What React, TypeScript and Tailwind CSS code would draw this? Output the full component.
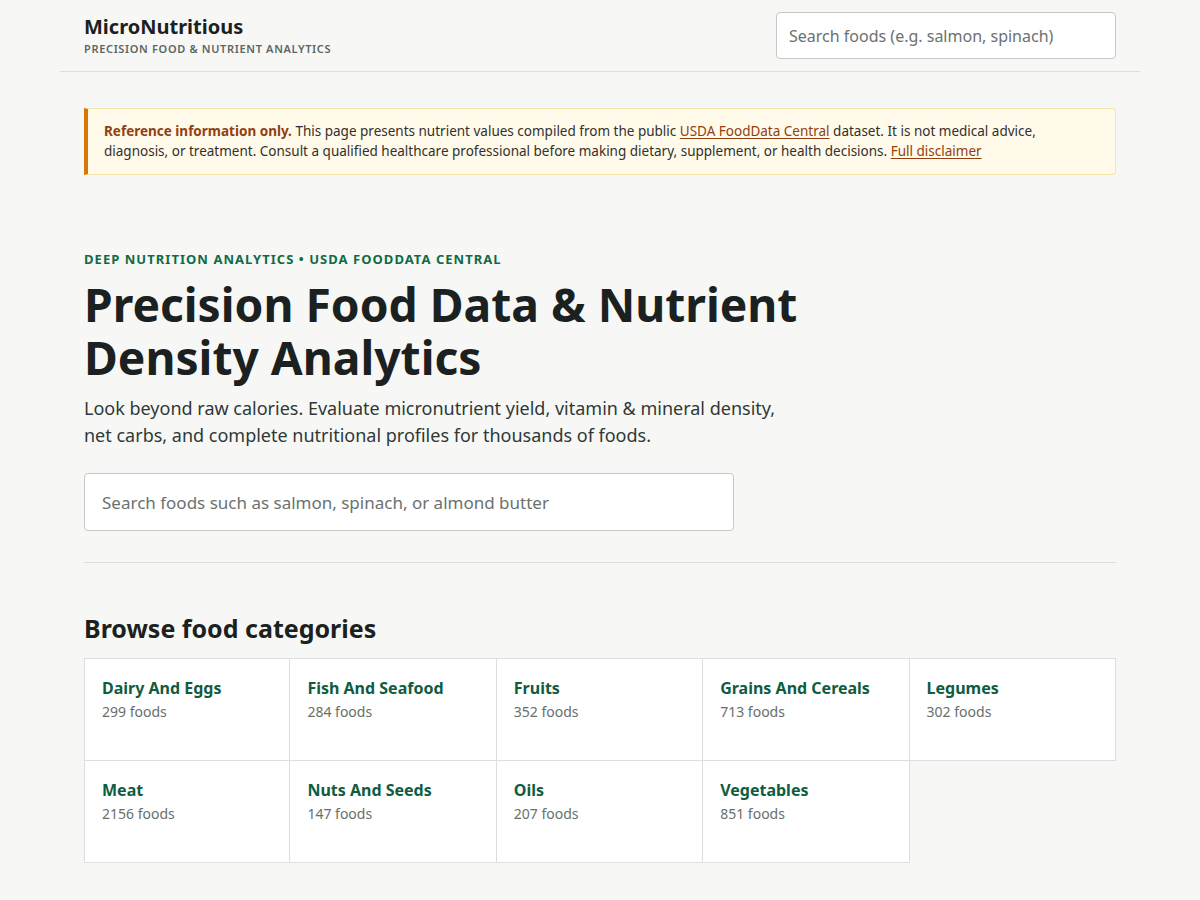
import React from "react";

const categories = [
  { name: "Dairy And Eggs", count: 299 },
  { name: "Fish And Seafood", count: 284 },
  { name: "Fruits", count: 352 },
  { name: "Grains And Cereals", count: 713 },
  { name: "Legumes", count: 302 },
  { name: "Meat", count: 2156 },
  { name: "Nuts And Seeds", count: 147 },
  { name: "Oils", count: 207 },
  { name: "Vegetables", count: 851 },
];

export default function App() {
  return (
    <div
      className="min-h-[900px] bg-[#f7f8f6] text-[#1b2120]"
      style={{ fontFamily: '"Noto Sans", "Open Sans", sans-serif' }}
    >
      <div className="mx-auto max-w-[1080px]">
        <header className="flex items-start justify-between border-b border-[#dcdfdc] px-6 pt-3 pb-3">
          <div className="mt-px">
            <div className="text-[20px] font-bold leading-[28px] text-[#1b2120]">MicroNutritious</div>
            <div className="text-[11px] font-semibold uppercase leading-[16px] tracking-[0.06em] text-[#5d6663]">
              Precision food &amp; nutrient analytics
            </div>
          </div>
          <input
            className="h-[47px] w-[340px] rounded-[4px] border border-[#c4c9c6] bg-white px-3 text-[16px] text-[#1b2120] placeholder:text-[#6b716f] outline-none"
            placeholder="Search foods (e.g. salmon, spinach)"
          />
        </header>

        <main className="px-6">
          <div className="mt-9 rounded-r-[4px] border border-[#f3e6a6] border-l-4 border-l-[#d97706] bg-[#fffaea] pt-3 pb-[13px] pr-4 pl-4 text-[13.5px] leading-[20px] text-[#33302a]">
            <strong className="font-bold text-[#92400e]">Reference information only.</strong> This page
            presents nutrient values compiled from the public{" "}
            <a className="text-[#92400e] underline underline-offset-2" href="#">
              USDA FoodData Central
            </a>{" "}
            dataset. It is not medical advice, diagnosis, or treatment. Consult a qualified healthcare
            professional before making dietary, supplement, or health decisions.{" "}
            <a className="text-[#92400e] underline underline-offset-2" href="#">
              Full disclaimer
            </a>
          </div>

          <section className="border-b border-[#dcdfdc] pt-[75px] pb-[31px]">
            <div className="text-[13px] font-bold uppercase leading-[18px] tracking-[0.08em] text-[#0f6b47]">
              Deep nutrition analytics • USDA FoodData Central
            </div>
            <h1 className="mt-[10px] max-w-[760px] text-[46.2px] font-bold leading-[53px] text-[#1b2120]">
              Precision Food Data &amp; Nutrient Density Analytics
            </h1>
            <p className="mt-[11px] max-w-[720px] text-[18px] leading-[27px] text-[#2f3836]">
              Look beyond raw calories. Evaluate micronutrient yield, vitamin &amp; mineral density, net
              carbs, and complete nutritional profiles for thousands of foods.
            </p>
            <input
              className="mt-6 h-[58px] w-[650px] rounded-[4px] border border-[#c4c9c6] bg-white px-[17px] text-[17px] text-[#1b2120] placeholder:text-[#6b716f] outline-none"
              placeholder="Search foods such as salmon, spinach, or almond butter"
            />
          </section>

          <section className="pt-[47px]">
            <h2 className="text-[25px] font-bold leading-[36px] text-[#1b2120]">Browse food categories</h2>
            <div className="mt-3 grid grid-cols-5">
              {categories.map((c, i) => (
                <a
                  key={c.name}
                  href="#"
                  className={
                    "-mt-px -ml-px block h-[103px] border border-[#dcdfdc] bg-white px-[17px] pt-[17px] " +
                    (i % 5 === 0 ? "ml-0 " : "") +
                    (i < 5 ? "mt-0" : "")
                  }
                >
                  <div className="text-[16px] font-bold leading-[24px] text-[#0f5c3f]">{c.name}</div>
                  <div className="text-[14px] leading-[24px] text-[#66706c]">{c.count} foods</div>
                </a>
              ))}
            </div>
          </section>
        </main>
      </div>
    </div>
  );
}
